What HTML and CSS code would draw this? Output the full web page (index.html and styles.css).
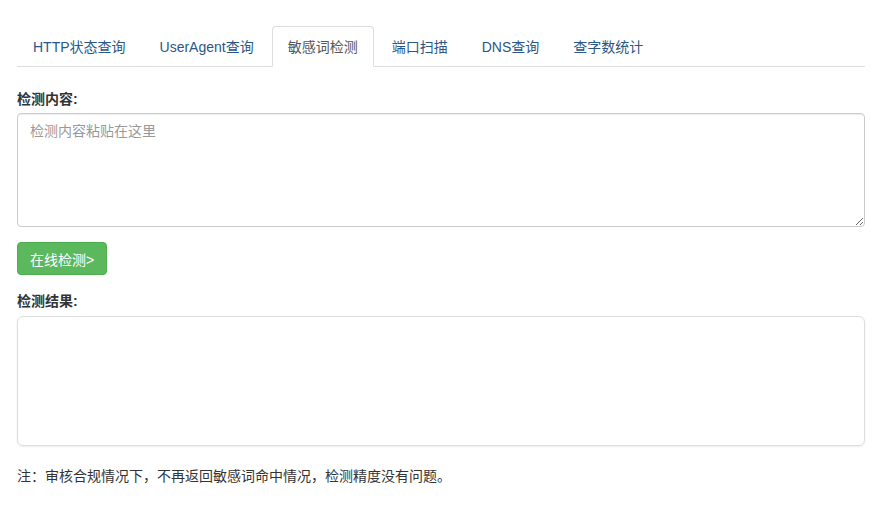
FILE: index.html
```html
<!DOCTYPE html>
<html>
  <head>
    <title>敏感词检测</title>
    <link rel="stylesheet" href="styles.css">
  </head>
  <body>
    <div class="container">
      <!-- tab nav -->
      <ul class="nav-tabs">
        <li><a href="#">HTTP状态查询</a></li>
        <li><a href="#">UserAgent查询</a></li>
        <li class="active"><a href="#">敏感词检测</a></li>
        <li><a href="#">端口扫描</a></li>
        <li><a href="#">DNS查询</a></li>
        <li><a href="#">查字数统计</a></li>
      </ul>

      <form class="check-form">
        <label for="content">检测内容:</label>
        <textarea id="content" placeholder="检测内容粘贴在这里"></textarea>
        <div class="btn-row">
          <button type="button" class="btn-success">在线检测&gt;</button>
        </div>
        <label>检测结果:</label>
        <div class="result"></div>
      </form>

      <p class="note">注：审核合规情况下，不再返回敏感词命中情况，检测精度没有问题。</p>
    </div>
  </body>
</html>
```

FILE: styles.css
```css
*{
    margin: 0;
    padding: 0;
    box-sizing: border-box;
}
body{
    font-family: "Liberation Sans", "Noto Sans CJK SC", sans-serif;
    font-size: 14px;
    color: #333;
    background: #fff;
}
.container{
    padding: 26px 17px 0 17px;
}
.nav-tabs{
    list-style: none;
    display: flex;
    border-bottom: 1px solid #ddd;
    height: 41px;
}
.nav-tabs li{
    margin-right: 2px;
    margin-bottom: -1px;
}
.nav-tabs a{
    display: block;
    height: 41px;
    line-height: 40px;
    padding: 0 15px;
    color: #2a5785;
    text-decoration: none;
    font-size: 14px;
    border: 1px solid transparent;
    border-radius: 4px 4px 0 0;
}
.nav-tabs .active a{
    color: #555;
    background: #fff;
    border-color: #ddd;
    border-bottom-color: #fff;
}
.check-form{
    display: flex;
    flex-direction: column;
}
.check-form label{
    font-weight: bold;
    font-size: 14px;
    margin-top: 23px;
    line-height: 18px;
    margin-bottom: 5px;
}
textarea{
    height: 114px;
    border: 1px solid #ccc;
    border-radius: 4px;
    padding: 6px 12px;
    font-family: inherit;
    font-size: 14px;
    color: #555;
    box-shadow: inset 0 1px 1px rgba(0,0,0,.075);
}
textarea::placeholder{
    color: #999;
}
.btn-row{
    margin-top: 15px;
}
.btn-success{
    background: #5cb85c;
    border: 1px solid #4cae4c;
    color: #fff;
    font-family: inherit;
    font-size: 14px;
    height: 33px;
    padding: 0 12px;
    border-radius: 4px;
}
.check-form .btn-row + label{
    margin-top: 17px;
}
.result{
    margin-top: 1px;
    height: 130px;
    border: 1px solid #ddd;
    border-radius: 6px;
    box-shadow: 0 1px 2px rgba(0,0,0,.08);
}
.note{
    margin-top: 20px;
    font-size: 14px;
    line-height: 20px;
}
```
